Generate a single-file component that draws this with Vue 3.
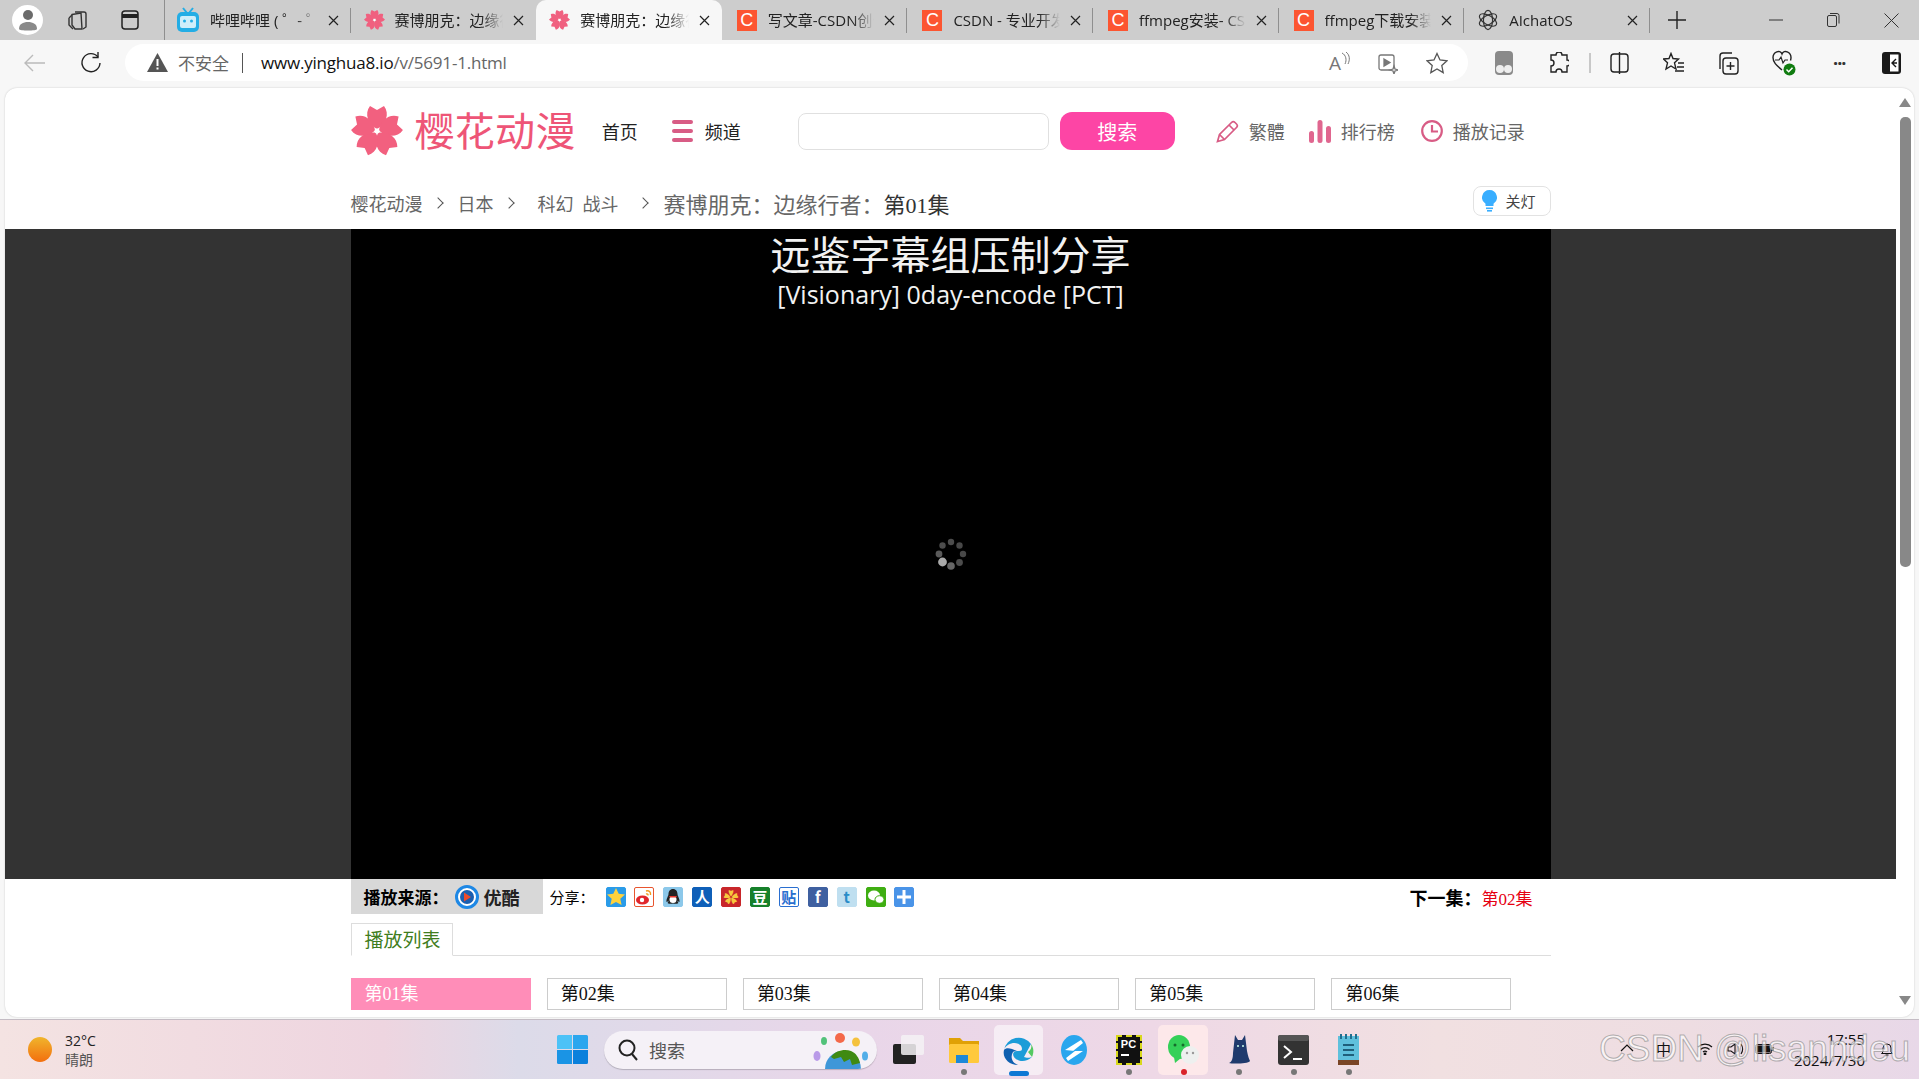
<script setup>
// 浏览器标签
const tabs = [
  { id: 1, icon: 'bili', text: '哔哩哔哩 ( ゜- ゜)つロ' },
  { id: 2, icon: 'flower', text: '赛博朋克：边缘行者' },
  { id: 3, icon: 'flower', text: '赛博朋克：边缘行者', active: true },
  { id: 4, icon: 'csdn', text: '写文章-CSDN创作中心' },
  { id: 5, icon: 'csdn', text: 'CSDN - 专业开发者社区' },
  { id: 6, icon: 'csdn', text: 'ffmpeg安装- CSDN搜索' },
  { id: 7, icon: 'csdn', text: 'ffmpeg下载安装教程' },
  { id: 8, icon: 'ai', text: 'AIchatOS' }
]

// 分享按钮
const shares = [
  { id: 'qzone', bg: '#2a9be8', color: '#ffd23c' },
  { id: 'weibo', bg: '#fff', color: '#e0252b', line: '#e8552f' },
  { id: 'qq', bg: '#8cc8ea', color: '#222' },
  { id: 'renren', bg: '#0f5fb8', glyph: '人', color: '#fff' },
  { id: 'kaixin', bg: '#c8262a', glyph: '✿', color: '#f7c83e' },
  { id: 'douban', bg: '#16802a', glyph: '豆', color: '#fff' },
  { id: 'tieba', bg: '#fff', glyph: '贴', color: '#2a6fd0', line: '#2a6fd0' },
  { id: 'fb', bg: '#3f60a0', glyph: 'f', color: '#fff' },
  { id: 'tw', bg: '#bfdff0', glyph: 't', color: '#2a8cc8' },
  { id: 'wx', bg: '#3fae12', color: '#fff' },
  { id: 'more', bg: '#4a94e8', color: '#fff' }
]

const episodes = ['第01集', '第02集', '第03集', '第04集', '第05集', '第06集']

const spinnerDots = [
  { x: 25, y: 13, r: 3.2, c: '#4c4c4c' },
  { x: 33.5, y: 16.5, r: 3.2, c: '#484848' },
  { x: 37, y: 25, r: 3.2, c: '#484848' },
  { x: 33.5, y: 33.5, r: 3.4, c: '#4c4c4c' },
  { x: 25, y: 37, r: 3.8, c: '#666' },
  { x: 16.5, y: 33, r: 4.4, c: '#aaa' },
  { x: 13, y: 25, r: 3.4, c: '#5a5a5a' },
  { x: 16.5, y: 16.5, r: 3.2, c: '#4c4c4c' }
]

const petals = [0, 72, 144, 216, 288]
const petal = 'M26 24C17 19 13 9 19 1l7 4 7-4c6 8 2 18-7 23z'
</script>

<template>
  <div class="desktop">
    <!-- 标签栏 -->
    <div class="tabstrip">
      <div class="strip-left">
        <span class="avatar">
          <svg width="22" height="24" viewBox="0 0 22 24"><circle cx="11" cy="7" r="5" fill="#6b6b6b" /><path d="M2 21c0-5 4-7 9-7s9 2 9 7c0 2-18 2-18 0z" fill="#8a8a8a" /></svg>
        </span>
        <svg class="strip-ico" width="24" height="24" viewBox="0 0 24 24" fill="none" stroke="#333" stroke-width="1.4"><path d="M9 4h9a2 2 0 0 1 2 2v13l-3 2" /><path d="M6 6.5l9-1.5 1 16-7 0-3-4z" /><path d="M3 10l3-3M3 10v7l4 4" /></svg>
        <svg class="strip-ico2" width="20" height="22" viewBox="0 0 20 22" fill="none" stroke="#222" stroke-width="1.5"><rect x="2" y="2" width="16" height="18" rx="3" /><path d="M2 7h16" stroke-width="4" /></svg>
      </div>
      <div
        v-for="tab in tabs"
        :key="tab.id"
        class="tab"
        :class="{ active: tab.active }"
      >
        <svg v-if="tab.icon === 'bili'" class="bili-ico" width="24" height="26" viewBox="0 0 24 26"><path d="M7 1l4 5M17 1l-4 5" stroke="#23ade5" stroke-width="2" /><rect x="1" y="5" width="22" height="20" rx="5" fill="#23ade5" /><rect x="4" y="9" width="16" height="12" rx="2" fill="#cfeefa" /><circle cx="8.500" cy="14" r="1.500" fill="#23ade5" /><circle cx="15.500" cy="14" r="1.500" fill="#23ade5" /></svg>
        <svg v-else-if="tab.icon === 'flower'" width="21" height="22" viewBox="0 0 52 52">
          <path v-for="a in petals" :key="a" :d="petal" fill="#f0607f" :transform="`rotate(${a} 26 26)`" />
          <circle cx="26" cy="26" r="3" fill="#fff" />
        </svg>
        <span v-else-if="tab.icon === 'csdn'" class="csdn-ico">C</span>
        <svg v-else width="22" height="24" viewBox="0 0 24 24" fill="none" stroke="#333" stroke-width="1.300">
          <ellipse cx="12" cy="12" rx="5" ry="10.500" />
          <ellipse cx="12" cy="12" rx="5" ry="10.500" transform="rotate(60 12 12)" />
          <ellipse cx="12" cy="12" rx="5" ry="10.500" transform="rotate(120 12 12)" />
        </svg>
        <span class="tab-text">{{ tab.text }}</span>
        <svg class="tab-x" width="11" height="11" viewBox="0 0 11 11" stroke="#222" stroke-width="1.200"><path d="M1 1l9 9M10 1l-9 9" /></svg>
      </div>
      <svg class="plus" width="18" height="18" viewBox="0 0 18 18" stroke="#222" stroke-width="1.400"><path d="M9 0v18M0 9h18" /></svg>
      <div class="winctl">
        <svg width="14" height="14" viewBox="0 0 14 14" stroke="#333"><path d="M0 7h14" /></svg>
        <svg width="13" height="14" viewBox="0 0 13 14" fill="none" stroke="#333"><rect x=".5" y="2.500" width="9" height="11" rx="1.500" /><path d="M3 .5h7a2 2 0 0 1 2 2v8" /></svg>
        <svg width="15" height="15" viewBox="0 0 15 15" stroke="#333"><path d="M.5.5l14 14M14.500.5l-14 14" /></svg>
      </div>
    </div>

    <!-- 地址栏 -->
    <div class="toolbar">
      <svg class="nav-back" width="23" height="20" viewBox="0 0 23 20" fill="none" stroke="#bbb" stroke-width="1.400"><path d="M22 10H2M10 2l-8 8 8 8" /></svg>
      <svg class="nav-reload" width="21" height="22" viewBox="0 0 21 22" fill="none" stroke="#222" stroke-width="1.400"><path d="M18 5a9 9 0 1 0 2 6" /><path d="M18 0v5.500h-5.500" /></svg>
      <div class="address">
        <svg width="21" height="19" viewBox="0 0 21 19"><path d="M10.500 0L21 19H0z" fill="#555" /><path d="M10.500 6v7M10.500 14.500v2" stroke="#fff" stroke-width="2" /></svg>
        <span class="unsafe">不安全</span>
        <span class="addr-sep"></span>
        <span class="url"><b>www.yinghua8.io</b>/v/5691-1.html</span>
        <div class="addr-icons">
          <span class="read-a">A<svg width="9" height="14" viewBox="0 0 9 14" fill="none" stroke="#777"><path d="M1 1c4 2 5 7 3 11M5 0c4 3 4 8 2 12" /></svg></span>
          <svg width="20" height="22" viewBox="0 0 20 22" fill="none" stroke="#777" stroke-width="1.300"><rect x="1" y="3" width="15" height="15" rx="2" /><path d="M6 7l6 3.500-6 3.500z" fill="#777" /><path d="M16 14l1 3 3 1-3 1-1 3-1-3-3-1 3-1z" fill="#f7f7f7" /></svg>
          <svg width="22" height="22" viewBox="0 0 22 22" fill="none" stroke="#555" stroke-width="1.300"><path d="M11 1.500l3 6.500 7 .8-5.200 4.800 1.400 7L11 17l-6.200 3.600 1.400-7L1 8.800 8 8z" /></svg>
        </div>
      </div>
      <div class="tool-icons">
        <svg class="ti-a" width="18" height="24" viewBox="0 0 18 24"><rect width="18" height="24" rx="4" fill="#8a8a8a" /><circle cx="5" cy="18" r="4" fill="#eee" /><circle cx="13" cy="18" r="4" fill="#eee" /></svg>
        <svg class="ti-b" width="20" height="22" viewBox="0 0 20 22" fill="none" stroke="#222" stroke-width="1.400"><path d="M7 3a3 3 0 0 1 6 0h5v5a3 3 0 0 1 0 6v6h-5a3 3 0 0 0-6 0H2v-6a3 3 0 0 0 0-6V3z" /></svg>
        <span class="tool-sep"></span>
        <svg class="ti-c" width="19" height="22" viewBox="0 0 19 22" fill="none" stroke="#222" stroke-width="1.400"><rect x="1" y="2" width="17" height="18" rx="3" /><path d="M9.500 0v22" /></svg>
        <svg class="ti-d" width="22" height="22" viewBox="0 0 22 22" fill="none" stroke="#222" stroke-width="1.400"><path d="M8 1.500l2 5 5.500.5-4 3.800L13 17l-5-3-5 3 1.500-6.200-4-3.800L6 6.500z" /><path d="M15 11h6M14 15h7M12 19h9" /></svg>
        <svg class="ti-e" width="22" height="24" viewBox="0 0 22 24" fill="none" stroke="#222" stroke-width="1.400"><rect x="6" y="7" width="15" height="16" rx="3" /><path d="M3 18V5a3 3 0 0 1 3-3h9M13.500 11v8M9.500 15h8" /></svg>
        <svg class="ti-f" width="24" height="26" viewBox="0 0 24 26"><path d="M10 20C4 15 1 12 1 7.500 1 2 8-1 10 4c2-5 9-2 9 3.500 0 1-.2 2-.5 3" fill="none" stroke="#222" stroke-width="1.400" /><path d="M3 10h4l2-3 2 6 2-3h3" fill="none" stroke="#222" stroke-width="1.200" /><circle cx="17.500" cy="19.500" r="6" fill="#107c10" /><path d="M14.500 19.500l2.200 2.200 3.800-4" fill="none" stroke="#fff" stroke-width="1.500" /></svg>
        <span class="dots">···</span>
        <svg class="ti-g" width="19" height="22" viewBox="0 0 19 22"><rect width="19" height="22" rx="3" fill="#1a1a1a" /><rect x="8" y="2.500" width="8.500" height="17" fill="#fff" /><path d="M14 7l-4 4 4 4M10 11h5" fill="none" stroke="#1a1a1a" stroke-width="1.400" /></svg>
      </div>
    </div>

    <!-- 页面区域 -->
    <div class="viewport">
      <div class="page">
        <header class="site-head">
          <svg class="logo-flower" width="52" height="52" viewBox="0 0 52 52">
            <path v-for="a in petals" :key="a" :d="petal" fill="#f2607f" :transform="`rotate(${a} 26 26)`" />
            <circle cx="26" cy="26" r="2.500" fill="#fff" />
          </svg>
          <span class="logo-text">樱花动漫</span>
          <a class="nav-home">首页</a>
          <span class="nav-channel">
            <i></i><i></i><i></i>
          </span>
          <a class="nav-channel-text">频道</a>
          <input class="search-input" />
          <button class="search-btn">搜索</button>
          <svg class="h-pencil" width="23" height="23" viewBox="0 0 23 23" fill="none" stroke="#d85c85" stroke-width="1.700"><path d="M1.500 21.500l2-7L15.500 2.500a2.500 2.500 0 0 1 3.500 0l1.500 1.500a2.500 2.500 0 0 1 0 3.500L8.500 19.500z" /><path d="M3.500 14.500l5 5M13 5l5 5" /></svg>
          <a class="h-link">繁體</a>
          <svg class="h-bars" width="22" height="23" viewBox="0 0 22 23" fill="#e0668f"><rect x="0" y="11" width="5" height="12" rx="2.500" /><rect x="8.500" y="0" width="5" height="23" rx="2.500" /><rect x="17" y="6" width="5" height="17" rx="2.500" /></svg>
          <a class="h-link">排行榜</a>
          <svg class="h-clock" width="22" height="22" viewBox="0 0 22 22" fill="none" stroke="#d85c85" stroke-width="2.200"><circle cx="11" cy="11" r="9.800" /><path d="M11 5v6.500h6" /></svg>
          <a class="h-link">播放记录</a>
        </header>

        <div class="crumbs">
          <a>樱花动漫</a><span class="gt"></span>
          <a class="c2">日本</a><span class="gt"></span>
          <a class="c3">科幻</a><a class="c4">战斗</a><span class="gt gt3"></span>
          <span class="crumb-title">赛博朋克：边缘行者：<em>第01集</em></span>
          <span class="lamp">
            <svg width="15" height="22" viewBox="0 0 15 22"><path d="M7.500 0a7.500 7.500 0 0 1 4 13.800V16h-8v-2.200A7.500 7.500 0 0 1 7.500 0z" fill="#39aeff" /><rect x="4" y="17.500" width="7" height="1.600" fill="#39aeff" /><rect x="5" y="20" width="5" height="1.600" fill="#39aeff" /></svg>
            关灯
          </span>
        </div>

        <div class="player-band">
          <div class="player">
            <div class="sub-cn">远鉴字幕组压制分享</div>
            <div class="sub-en">[Visionary] 0day-encode [PCT]</div>
            <svg class="spinner" width="50" height="50" viewBox="0 0 50 50">
              <circle v-for="(d, i) in spinnerDots" :key="i" :cx="d.x" :cy="d.y" :r="d.r" :fill="d.c" />
            </svg>
          </div>
        </div>

        <div class="wrap">
          <div class="source-row">
            <div class="source">
              <b>播放来源：</b>
              <svg width="24" height="26" viewBox="0 0 24 26"><circle cx="12" cy="13" r="10.500" fill="#fff" stroke="#1e88e5" stroke-width="3" /><circle cx="12" cy="13" r="7" fill="#1b5fb0" /><path d="M9 8.500l7 4.500-7 4.500z" fill="#ee4b2b" /></svg>
              <b class="youku">优酷</b>
            </div>
            <span class="share-label">分享：</span>
            <div class="shares">
              <span
                v-for="s in shares"
                :key="s.id"
                class="share"
                :style="{ background: s.bg, color: s.color, borderColor: s.line || s.bg }"
              >
                <svg v-if="s.id === 'qzone'" width="18" height="18" viewBox="0 0 18 18"><path d="M9 0l2.700 5.800 6.300.7-4.700 4.300 1.300 6.200L9 14l-5.600 3 1.300-6.200L0 6.500l6.300-.7z" fill="#ffd23c" /></svg>
                <svg v-else-if="s.id === 'weibo'" width="18" height="18" viewBox="0 0 18 18"><ellipse cx="7.500" cy="12" rx="6.500" ry="4.500" fill="#e0252b" /><circle cx="7" cy="12" r="2.200" fill="#fff" /><path d="M11 3c3-1 5 1 4.500 4M11 6c1.500-.5 2.200.3 2 1.500" fill="none" stroke="#f39a1f" stroke-width="1.400" /></svg>
                <svg v-else-if="s.id === 'qq'" width="18" height="18" viewBox="0 0 18 18"><path d="M9 1c3 0 4.500 2.500 4.500 5 0 2 2.500 5 2 8-1 0-1.500-1-2-1.500 0 1 .5 2 1 2.500-1 1-4 1-5.500.5-1.500.5-4.500.5-5.500-.5.5-.5 1-1.500 1-2.500-.5.500-1 1.500-2 1.500-.5-3 2-6 2-8C4.500 3.500 6 1 9 1z" fill="#222" /><ellipse cx="9" cy="11.500" rx="3.500" ry="3.500" fill="#fff" /><path d="M5 8h8l-1 1.500H6z" fill="#e8352b" /></svg>
                <svg v-else-if="s.id === 'wx'" width="18" height="18" viewBox="0 0 18 18"><ellipse cx="7" cy="7.500" rx="6" ry="5" fill="#fff" /><ellipse cx="12.500" cy="11.500" rx="4.500" ry="3.800" fill="#fff" stroke="#3fae12" /></svg>
                <svg v-else-if="s.id === 'more'" width="18" height="18" viewBox="0 0 18 18"><path d="M9 2v14M2 9h14" stroke="#fff" stroke-width="3" /></svg>
                <template v-else>{{ s.glyph }}</template>
              </span>
            </div>
            <div class="next"><b>下一集：</b><a>第02集</a></div>
          </div>

          <div class="list-tabs">
            <span class="list-tab">播放列表</span>
          </div>

          <div class="episodes">
            <a
              v-for="(ep, i) in episodes"
              :key="ep"
              class="episode"
              :class="{ current: i === 0 }"
            >{{ ep }}</a>
          </div>
        </div>
      </div>
      <div class="scrollbar">
        <span class="sb-up"></span>
        <span class="sb-thumb"></span>
        <span class="sb-down"></span>
      </div>
    </div>

    <!-- 任务栏 -->
    <div class="taskbar">
      <div class="weather">
        <span class="sun"></span>
        <div class="weather-text">
          <span>32°C</span>
          <span class="w2">晴朗</span>
        </div>
      </div>
      <div class="center">
        <span class="tile">
          <svg width="31" height="29" viewBox="0 0 31 29"><path d="M0 1.500A1.500 1.500 0 0 1 1.500 0H15v14H0z" fill="#4cc2f7" /><path d="M16 0h13.500A1.500 1.500 0 0 1 31 1.500V14H16z" fill="#2ba6ee" /><path d="M0 15h15v14H1.500A1.500 1.500 0 0 1 0 27.500z" fill="#1a94e5" /><path d="M16 15h15v12.500a1.500 1.500 0 0 1-1.500 1.500H16z" fill="#0a80dc" /></svg>
        </span>
        <div class="task-search">
          <svg width="20" height="22" viewBox="0 0 20 22" fill="none" stroke="#222" stroke-width="2"><circle cx="9" cy="9" r="7.500" /><path d="M14 15l5 6" /></svg>
          <span>搜索</span>
          <svg class="earth" width="57" height="36" viewBox="0 0 57 36">
            <circle cx="30" cy="36" r="18" fill="#3f97d8" />
            <path d="M18 24c5-7 14-8 20-6 5 2 8 7 9 12l-8 2-2-6-6 3-3-5-7 2z" fill="#3f8a12" />
            <ellipse cx="4" cy="23" rx="3.500" ry="5" fill="#b99ae8" />
            <ellipse cx="11" cy="8" rx="3" ry="4" fill="#52c27a" />
            <circle cx="27" cy="5" r="5" fill="#f4694a" />
            <ellipse cx="43" cy="9" rx="4" ry="4.500" fill="#f5c23d" />
            <ellipse cx="52" cy="23" rx="3" ry="4.500" fill="#52aee8" />
          </svg>
        </div>
        <span class="tile">
          <svg width="31" height="29" viewBox="0 0 31 29"><rect x="0" y="9" width="23" height="20" rx="2" fill="#222" /><rect x="8" y="0" width="23" height="20" rx="2" fill="#f5f2f4" opacity=".85" /></svg>
        </span>
        <span class="tile">
          <svg width="30" height="27" viewBox="0 0 30 27"><path d="M0 2h11l3 3h16v4H0z" fill="#e0a106" /><rect y="8" width="30" height="19" rx="1.500" fill="#ffc93c" /><path d="M7 19h12v8H7z" fill="#1e88d8" /></svg>
          <i class="dot"></i>
        </span>
        <span class="tile tile-on">
          <svg width="31" height="30" viewBox="0 0 31 30"><path d="M28 9A15 15 0 0 0 1 15c3-9 18-9 18-1 0 2-2 2-5 2-5 0-5 5-1 8 4 3 11 3 16-2-2 1-6 1-8 0" fill="#1c9cd8" /><path d="M1 15c-2 8 5 15 14 15-6-2-8-8-5-13 1-1 2-1 4-1-6-3-11-4-13-1z" fill="#0f60b0" /><path d="M28 9c1 3 0 6-3 8l4 5c2-4 2-9-1-13z" fill="#54c962" /></svg>
          <i class="bar"></i>
        </span>
        <span class="tile">
          <svg width="28" height="30" viewBox="0 0 28 30"><ellipse cx="14" cy="15" rx="13" ry="15" fill="#29a6ee" /><path d="M5 15L21 5l2 3-10 8h10L8 26l-2-3 9-7z" fill="#fff" /></svg>
        </span>
        <span class="tile">
          <span class="pycharm"><em>PC</em><u></u></span>
          <i class="dot"></i>
        </span>
        <span class="tile tile-wx">
          <svg width="31" height="30" viewBox="0 0 31 30"><ellipse cx="11" cy="12" rx="11" ry="12" fill="#34d058" /><path d="M6 22l1 6 6-5z" fill="#34d058" /><circle cx="7" cy="10" r="1.500" fill="#156b2c" /><circle cx="15" cy="10" r="1.500" fill="#156b2c" /><ellipse cx="22" cy="20" rx="9" ry="9" fill="#eef0ef" /><circle cx="19" cy="18" r="1.200" fill="#999" /><circle cx="25" cy="18" r="1.200" fill="#999" /></svg>
          <i class="dot red"></i>
        </span>
        <span class="tile">
          <svg width="22" height="29" viewBox="0 0 22 29"><path d="M7 0l3 5h4l3-5 2 16c1 5 2 8 3 10-2 3-18 3-21 2 3-1 4-5 4-10z" fill="#1f3a6d" /><circle cx="10" cy="11" r="1" fill="#cfe" /><circle cx="15" cy="11" r="1" fill="#cfe" /></svg>
          <i class="dot"></i>
        </span>
        <span class="tile">
          <svg width="31" height="30" viewBox="0 0 31 30"><rect width="31" height="30" rx="3" fill="#333" /><rect width="31" height="6" rx="2" fill="#555" /><path d="M6 11l7 6-7 6" fill="none" stroke="#fff" stroke-width="2" /><path d="M15 24h9" stroke="#fff" stroke-width="2" /></svg>
          <i class="dot"></i>
        </span>
        <span class="tile">
          <svg width="21" height="31" viewBox="0 0 21 31"><rect y="2" width="21" height="27" fill="#5fc0dc" /><rect y="26" width="21" height="5" fill="#7a4526" /><path d="M3 0v5M8 0v5M13 0v5M18 0v5" stroke="#1f6f8e" stroke-width="2" /><path d="M5 11h11M5 16h11M5 21h11" stroke="#1f5f7a" stroke-width="2" /></svg>
          <i class="dot"></i>
        </span>
      </div>
      <div class="tray">
        <svg class="tr-up" width="14" height="8" viewBox="0 0 14 8" fill="none" stroke="#111" stroke-width="1.200"><path d="M1 7l6-6 6 6" /></svg>
        <span class="tr-ime">中</span>
        <svg class="tr-wifi" width="16" height="13" viewBox="0 0 16 13" fill="none" stroke="#111" stroke-width="1.200"><path d="M1 5a10 10 0 0 1 14 0M3.500 7.500a6.500 6.500 0 0 1 9 0M6 10a3 3 0 0 1 4 0" /><circle cx="8" cy="12" r=".8" fill="#111" /></svg>
        <svg class="tr-vol" width="18" height="14" viewBox="0 0 18 14" fill="none" stroke="#111" stroke-width="1.100"><path d="M1 5h3l4-3v10L4 9H1z" /><path d="M11 4c1 2 1 4 0 6M14 2c2 3 2 7 0 10" /></svg>
        <svg class="tr-bat" width="20" height="13" viewBox="0 0 20 13" fill="none" stroke="#111"><rect x=".5" y="2.500" width="16" height="9" rx="2" /><rect x="2" y="4" width="13" height="6" fill="#111" /><path d="M18 5v4" stroke-width="2" /></svg>
        <div class="clock">
          <span>17:55</span>
          <span>2024/7/30</span>
        </div>
        <svg class="tr-bell" width="14" height="14" viewBox="0 0 14 14" fill="none" stroke="#111"><path d="M3 10V6a4 4 0 0 1 8 0v4l1.500 1.500h-11zM5.500 13h3" /></svg>
      </div>
      <div class="watermark">CSDN @lisanndeu</div>
    </div>
  </div>
</template>

<style scoped>
.desktop {
  width: 1919px;
  height: 1079px;
  display: flex;
  flex-direction: column;
  overflow: hidden;
  background: #f7f7f7;
  font-family: "Open Sans", "Noto Sans CJK SC", sans-serif;
}

/* 标签栏 */
.tabstrip {
  height: 40px;
  display: flex;
  align-items: stretch;
  background: #cdcdcd;
  flex: none;
}

.strip-left {
  width: 165px;
  flex: none;
  display: flex;
  align-items: center;
  padding-left: 12px;
  box-sizing: border-box;
  border-right: 1px solid #8f8f8f;
  background-clip: padding-box;
}

.avatar {
  width: 31px;
  height: 30px;
  border-radius: 50%;
  background: #fff;
  display: flex;
  align-items: center;
  justify-content: center;
}

.strip-ico {
  margin-left: 23px;
}

.strip-ico2 {
  margin-left: 30px;
}

.tab {
  width: 185.6px;
  flex: none;
  box-sizing: border-box;
  display: flex;
  align-items: center;
  gap: 10px;
  padding: 0 12px 0 13px;
  position: relative;
}

.tab::after {
  content: '';
  position: absolute;
  right: 0;
  top: 8px;
  height: 25px;
  width: 1px;
  background: #8f8f8f;
}

.tab.active {
  background: #f7f7f7;
  border-radius: 10px 10px 0 0;
}

.tab.active::after,
.tab:nth-child(3)::after,
.tab:nth-child(4)::after {
  display: none;
}

.tab-text {
  flex: 1;
  min-width: 0;
  font-size: 15px;
  line-height: 20px;
  white-space: nowrap;
  overflow: hidden;
  color: #222;
  -webkit-mask-image: linear-gradient(90deg, #000 80%, transparent 100%);
  mask-image: linear-gradient(90deg, #000 80%, transparent 100%);
}

.tab-x {
  flex: none;
}

.bili-ico {
  margin-left: -2px;
}

.csdn-ico {
  width: 20px;
  height: 21px;
  flex: none;
  margin: 0 1px 0 2px;
  background: #fc5531;
  color: #fff;
  font-size: 18px;
  line-height: 21px;
  text-align: center;
  font-family: "Liberation Sans", sans-serif;
}

.plus {
  align-self: center;
  margin-left: 18px;
}

.winctl {
  margin-left: auto;
  display: flex;
  align-items: center;
  gap: 44px;
  padding-right: 20px;
}

/* 地址栏 */
.toolbar {
  height: 48px;
  flex: none;
  display: flex;
  align-items: center;
  padding-bottom: 3px;
  box-sizing: border-box;
  background: #f7f7f7;
}

.nav-back {
  margin-left: 23px;
}

.nav-reload {
  margin-left: 34px;
}

.address {
  margin-left: 24px;
  width: 1343px;
  height: 37px;
  border-radius: 19px;
  background: #fff;
  display: flex;
  align-items: center;
  padding-left: 22px;
  box-sizing: border-box;
}

.unsafe {
  margin-left: 10px;
  font-size: 17px;
  color: #666;
}

.addr-sep {
  width: 1px;
  height: 20px;
  background: #555;
  margin: 0 18px 0 13px;
}

.url {
  font-size: 17px;
  color: #666;
  letter-spacing: -0.2px;
}

.url b {
  font-weight: 400;
  color: #111;
}

.addr-icons {
  margin-left: auto;
  display: flex;
  align-items: center;
  gap: 28px;
  padding-right: 20px;
}

.read-a {
  display: flex;
  align-items: flex-start;
  font-size: 19px;
  line-height: 22px;
  color: #777;
}

.tool-icons {
  margin-left: 27px;
  display: flex;
  align-items: center;
}

.ti-b { margin-left: 36px; }
.tool-sep { width: 2px; height: 20px; background: #c8c8c8; margin-left: 20px; }
.ti-c { margin-left: 19px; }
.ti-d { margin-left: 34px; }
.ti-e { margin-left: 32px; }
.ti-f { margin-left: 33px; }
.dots { margin-left: 37px; font-size: 18px; font-weight: 700; color: #333; letter-spacing: -1px; }
.ti-g { margin-left: 37px; }

/* 页面 */
.viewport {
  height: 929px;
  flex: none;
  margin: 0 5px;
  display: flex;
  background: #fff;
  border-radius: 12px;
  overflow: hidden;
  box-shadow: 0 0 2px rgba(0, 0, 0, 0.2);
}

.page {
  width: 1891px;
  flex: none;
  overflow: hidden;
  font-family: "Liberation Serif", "Noto Sans CJK SC", serif;
  color: #333;
}

.site-head {
  width: 1200px;
  height: 85px;
  margin: 0 auto;
  display: flex;
  align-items: center;
  padding-top: 1px;
  box-sizing: border-box;
}

.logo-text {
  margin: -4px 0 0 12px;
  font-size: 40px;
  line-height: 50px;
  letter-spacing: 0.3px;
  color: #ee5577;
  font-family: "Noto Sans CJK SC", sans-serif;
  white-space: nowrap;
}

.nav-home {
  margin-left: 26px;
  font-size: 18px;
  color: #222;
  white-space: nowrap;
}

.nav-channel {
  margin-left: 34px;
  width: 21px;
  display: flex;
  flex-direction: column;
  gap: 5px;
}

.nav-channel i {
  display: block;
  height: 4px;
  border-radius: 2px;
  background: #d85c85;
}

.nav-channel-text {
  margin-left: 12px;
  font-size: 18px;
  color: #222;
  white-space: nowrap;
}

.search-input {
  margin-left: 57px;
  width: 251px;
  height: 37px;
  box-sizing: border-box;
  border: 1px solid #e0e0e0;
  border-radius: 8px;
  background: #fff;
  outline: none;
}

.search-btn {
  margin-left: 11px;
  width: 115px;
  height: 38px;
  border: none;
  border-radius: 12px;
  background: #fd45a5;
  color: #fff;
  font-size: 20px;
  font-family: inherit;
  padding: 0;
}

.h-pencil { margin-left: 41px; }
.h-bars { margin-left: 24px; }
.h-clock { margin-left: 26px; }

.h-link {
  margin-left: 10px;
  font-size: 18px;
  color: #666;
  white-space: nowrap;
}

.crumbs {
  width: 1200px;
  height: 56px;
  margin: 0 auto;
  display: flex;
  align-items: center;
  padding-top: 4px;
  box-sizing: border-box;
  font-size: 18px;
  color: #666;
  white-space: nowrap;
}

.gt {
  width: 7px;
  height: 7px;
  border-top: 1px solid #555;
  border-right: 1px solid #555;
  transform: rotate(45deg);
  margin: 0 16px 0 11px;
  flex: none;
}

.c3 { margin-left: 9px; }
.c4 { margin-left: 9px; }
.gt3 { margin-left: 20px; }

.crumb-title {
  font-size: 22px;
  margin-left: 1px;
}

.crumb-title em {
  font-style: normal;
  color: #333;
}

.lamp {
  margin-left: auto;
  height: 30px;
  width: 78px;
  box-sizing: border-box;
  border: 1px solid #e2e2e2;
  border-radius: 8px;
  display: flex;
  align-items: center;
  gap: 9px;
  padding-left: 8px;
  font-size: 15px;
  color: #444;
  margin-top: -5px;
}

.player-band {
  background: #333;
  height: 650px;
}

.player {
  width: 1200px;
  height: 650px;
  margin: 0 auto;
  background: #000;
  position: relative;
  text-align: center;
  color: #f2f2f2;
  font-family: "Open Sans", "Noto Sans CJK SC", sans-serif;
}

.sub-cn {
  padding-top: 2px;
  font-size: 40px;
  line-height: 48px;
}

.sub-en {
  font-size: 25px;
  line-height: 30px;
}

.spinner {
  position: absolute;
  left: 575px;
  top: 300px;
}

.wrap {
  width: 1200px;
  margin: 0 auto;
}

.source-row {
  height: 35px;
  display: flex;
  align-items: center;
  color: #000;
}

.source {
  width: 192px;
  height: 35px;
  flex: none;
  box-sizing: border-box;
  padding-left: 13px;
  background: #d8d8d8;
  display: flex;
  align-items: center;
  font-size: 17px;
  white-space: nowrap;
}

.source svg {
  margin-left: 6px;
  flex: none;
}

.youku {
  margin-left: 5px;
  font-size: 18px;
  color: #222;
  font-family: "Noto Sans CJK SC", sans-serif;
}

.share-label {
  margin-left: 7px;
  font-size: 15px;
  white-space: nowrap;
}

.shares {
  margin-left: 11px;
  display: flex;
  gap: 8.9px;
}

.share {
  width: 20px;
  height: 20px;
  box-sizing: border-box;
  border: 1px solid;
  border-radius: 2px;
  font-size: 15px;
  line-height: 18px;
  text-align: center;
  font-family: "Noto Sans CJK SC", sans-serif;
  font-weight: 700;
  overflow: hidden;
}

.share svg {
  display: block;
}

.next {
  margin-left: auto;
  padding-right: 18px;
  font-size: 17px;
  white-space: nowrap;
}

.next b {
  font-size: 18px;
}

.next a {
  color: #e60012;
}

.list-tabs {
  margin-top: 9px;
  height: 32px;
  border-bottom: 1px solid #ddd;
  display: flex;
}

.list-tab {
  width: 102px;
  height: 33px;
  box-sizing: border-box;
  border: 1px solid #ddd;
  border-bottom: 1px solid #fff;
  padding-left: 13px;
  font-size: 19px;
  line-height: 33px;
  color: #3f7d20;
  background: #fff;
}

.episodes {
  margin-top: 22px;
  display: flex;
  gap: 16.2px;
}

.episode {
  width: 180px;
  height: 32px;
  box-sizing: border-box;
  border: 1px solid #ccc;
  padding-left: 13px;
  font-size: 18px;
  line-height: 30px;
  color: #111;
}

.episode.current {
  background: #ff8db8;
  border-color: #ff8db8;
  color: #fff;
}

/* 滚动条 */
.scrollbar {
  flex: 1;
  display: flex;
  flex-direction: column;
  align-items: center;
  padding-top: 10px;
  position: relative;
}

.sb-up,
.sb-down {
  width: 0;
  height: 0;
  border-left: 6.5px solid transparent;
  border-right: 6.5px solid transparent;
}

.sb-up {
  border-bottom: 9px solid #888;
}

.sb-down {
  position: absolute;
  bottom: 12px;
  border-top: 9px solid #888;
}

.sb-thumb {
  width: 11px;
  height: 450px;
  margin-top: 10px;
  border-radius: 5px;
  background: #888;
}

/* 任务栏 */
.taskbar {
  margin-top: 2px;
  flex: 1;
  display: grid;
  grid-template-columns: 545px 1075px 1fr;
  align-items: center;
  position: relative;
  border-top: 1px solid #c4bcc4;
  background: linear-gradient(90deg, #f4e3e2 0%, #eed5e0 20%, #dcdbe9 27%, #e9d6e9 45%, #eed8e6 60%, #f1e0e1 75%, #eedde2 88%, #e8d8e8 100%);
}

.weather {
  display: flex;
  align-items: center;
  padding-left: 28px;
}

.sun {
  width: 24px;
  height: 25px;
  border-radius: 50%;
  background: linear-gradient(180deg, #f0b52c, #f36f0e);
}

.weather-text {
  margin-left: 13px;
  display: flex;
  flex-direction: column;
  font-size: 14px;
  line-height: 19px;
  color: #222;
}

.weather-text .w2 {
  color: #555;
}

.center {
  display: flex;
  align-items: center;
  height: 100%;
}

.tile {
  width: 55px;
  height: 100%;
  flex: none;
  display: flex;
  align-items: center;
  justify-content: center;
  position: relative;
}

.tile-on::before,
.tile-wx::before {
  content: '';
  position: absolute;
  left: 3px;
  right: 3px;
  top: 5px;
  bottom: 4px;
  border-radius: 5px;
  background: rgba(255, 255, 255, 0.55);
}

.tile-wx::before {
  background: #fde8ea;
  left: 2px;
  right: 3px;
}

.tile svg,
.tile .pycharm {
  position: relative;
}

.dot {
  position: absolute;
  left: 25px;
  bottom: 4px;
  width: 6px;
  height: 6px;
  border-radius: 50%;
  background: #777;
}

.dot.red {
  background: #d9232a;
}

.bar {
  position: absolute;
  left: 18px;
  bottom: 3px;
  width: 20px;
  height: 5px;
  border-radius: 3px;
  background: #0f78d4;
}

.pycharm {
  width: 26px;
  height: 30px;
  box-sizing: border-box;
  background: #111;
  border: 2px dashed #d8d81c;
  color: #fff;
  display: block;
  font-size: 11px;
  line-height: 14px;
  text-align: center;
  font-family: "Liberation Sans", sans-serif;
}

.pycharm em {
  display: block;
  font-style: normal;
  font-weight: 700;
}

.pycharm u {
  display: block;
  width: 8px;
  height: 2px;
  margin: 3px 0 0 3px;
  background: #fff;
}

.task-search {
  width: 273px;
  height: 38px;
  flex: none;
  margin: 0 4px 0 4px;
  border-radius: 19px;
  background: #f5f1f7;
  box-shadow: 0 1px 1px rgba(0, 0, 0, 0.2);
  display: flex;
  align-items: center;
  padding-left: 14px;
  box-sizing: border-box;
  font-size: 18px;
  color: #555;
  overflow: hidden;
}

.task-search span {
  margin-left: 11px;
}

.earth {
  margin-left: auto;
  margin-right: 7px;
  align-self: flex-end;
}

.tray {
  position: relative;
  height: 100%;
}

.tray > svg,
.tr-ime {
  position: absolute;
}

.tr-up { left: 0; top: 24px; }
.tr-ime { left: 36px; top: 17px; font-size: 15px; line-height: 24px; color: #111; }
.tr-wifi { left: 77px; top: 22px; }
.tr-vol { left: 107px; top: 22px; }
.tr-bat { left: 135px; top: 22px; }
.tr-bell { left: 260px; top: 22px; }

.clock {
  position: absolute;
  left: 176px;
  top: 9px;
  width: 69px;
  display: flex;
  flex-direction: column;
  align-items: flex-end;
  font-size: 15px;
  line-height: 21px;
  color: #111;
  white-space: nowrap;
}

.watermark {
  position: absolute;
  left: 1599px;
  top: 7px;
  font-family: "Liberation Sans", sans-serif;
  font-size: 37px;
  line-height: 44px;
  white-space: nowrap;
  color: rgba(255, 255, 255, 0.65);
  -webkit-text-stroke: 1px rgba(130, 130, 130, 0.6);
  pointer-events: none;
}
</style>
